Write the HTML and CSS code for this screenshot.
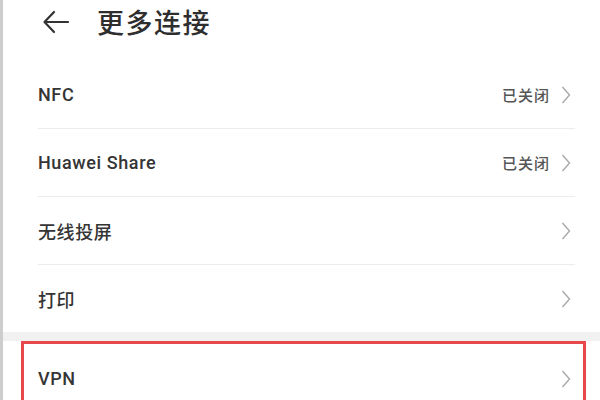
FILE: index.html
```html
<!DOCTYPE html>
<html lang="zh-CN">
<head>
	<meta charset="utf-8" />
	<title>更多连接</title>
	<link rel="stylesheet" href="styles.css">
</head>
<body>

<div class="page">
	<div class="header">
		<svg class="back" width="30" height="26" viewBox="0 0 30 26">
			<path d="M27 13 H4 M13 3 L3.5 13 L13 23" fill="none" stroke="#333" stroke-width="2.2" stroke-linecap="round" stroke-linejoin="round" />
		</svg>
		<h1 class="title">更多连接</h1>
	</div>

	<div class="group">
		<div class="row">
			<span class="label">NFC</span>
			<span class="right"><span class="status">已关闭</span><svg class="chev" width="10" height="18" viewBox="0 0 10 18"><path d="M1.5 1 L8.5 9 L1.5 17" fill="none" stroke="#a8a8a8" stroke-width="1.4" /></svg></span>
		</div>
		<div class="row">
			<span class="label">Huawei Share</span>
			<span class="right"><span class="status">已关闭</span><svg class="chev" width="10" height="18" viewBox="0 0 10 18"><path d="M1.5 1 L8.5 9 L1.5 17" fill="none" stroke="#a8a8a8" stroke-width="1.4" /></svg></span>
		</div>
		<div class="row">
			<span class="label">无线投屏</span>
			<span class="right"><svg class="chev" width="10" height="18" viewBox="0 0 10 18"><path d="M1.5 1 L8.5 9 L1.5 17" fill="none" stroke="#a8a8a8" stroke-width="1.4" /></svg></span>
		</div>
		<div class="row">
			<span class="label">打印</span>
			<span class="right"><svg class="chev" width="10" height="18" viewBox="0 0 10 18"><path d="M1.5 1 L8.5 9 L1.5 17" fill="none" stroke="#a8a8a8" stroke-width="1.4" /></svg></span>
		</div>
	</div>

	<div class="spacer"></div>

	<div class="group marked">
		<div class="row">
			<span class="label">VPN</span>
			<span class="right"><svg class="chev" width="10" height="18" viewBox="0 0 10 18"><path d="M1.5 1 L8.5 9 L1.5 17" fill="none" stroke="#a8a8a8" stroke-width="1.4" /></svg></span>
		</div>
		<div class="highlight"></div>
	</div>
</div>

</body>
</html>
```

FILE: styles.css
```css
html,
body {
	margin: 0;
	height: 100%;
	overflow: hidden;
	background: #fff;
}
body {
	font-family: 'Roboto', 'Noto Sans CJK SC', sans-serif;
	color: #333;
}
.page {
	height: 100%;
	border-left: 3px solid #cdcdcd;
}
.header {
	display: flex;
	align-items: center;
	height: 61px;
	padding-left: 38px;
	box-sizing: border-box;
	padding-bottom: 18px;
}
.back {
	display: block;
}
.title {
	margin: 0 0 0 26px;
	font-family: 'Noto Sans CJK SC', sans-serif;
	font-size: 27px;
	font-weight: 500;
	letter-spacing: 1.5px;
	color: #2e2e2e;
}
.group {
	background: #fff;
}
.row {
	display: flex;
	align-items: center;
	justify-content: space-between;
	height: 67px;
	margin: 0 25px 0 35px;
	border-bottom: 1px solid #ececec;
}
.row:last-child,
.marked .row {
	border-bottom: none;
}
.label {
	font-size: 18px;
	font-weight: 500;
	letter-spacing: 0.6px;
	color: #353535;
}
.right {
	display: flex;
	align-items: center;
}
.status {
	font-family: 'Noto Sans CJK SC', sans-serif;
	font-size: 15px;
	font-weight: 500;
	letter-spacing: 1px;
	color: #555;
	margin-right: 11px;
}
.chev {
	display: block;
	margin-right: 4px;
}
.spacer {
	height: 9px;
	background: #f1f1f1;
}
.marked {
	position: relative;
	box-sizing: border-box;
	height: 59px;
	padding-top: 4px;
	overflow: hidden;
}
.highlight {
	position: absolute;
	top: 0;
	left: 18px;
	right: 14px;
	bottom: 0;
	border: 3px solid #e8484b;
	border-bottom: none;
}
```
